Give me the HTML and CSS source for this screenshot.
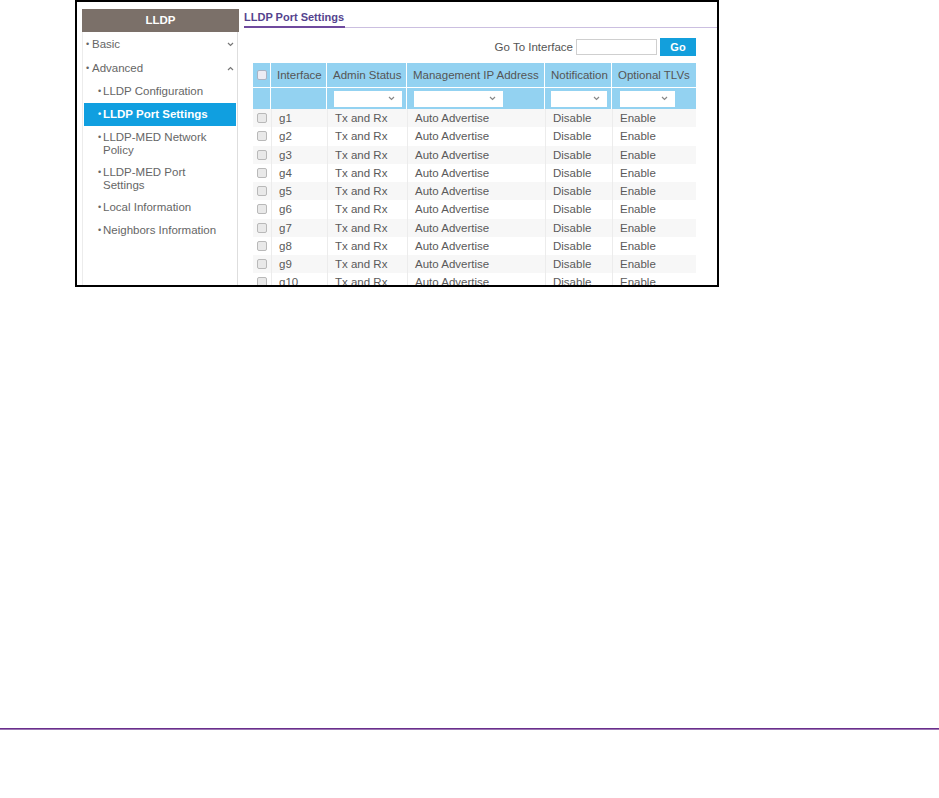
FILE: index.html
```html
<!DOCTYPE html>
<html>
<head>
<meta charset="utf-8">
<link rel="stylesheet" href="styles.css">
</head>
<body>
<div class="shot">
  <div class="side">
    <div class="side-head">LLDP</div>
    <div class="item top"><span class="b">•</span><span class="t">Basic</span><svg class="chev" width="7" height="5" viewBox="0 0 7 5"><polyline points="1,1 3.5,3.5 6,1" fill="none" stroke="#777" stroke-width="1.2"/></svg></div>
    <div class="item top"><span class="b">•</span><span class="t">Advanced</span><svg class="chev" width="7" height="5" viewBox="0 0 7 5"><polyline points="1,4 3.5,1.5 6,4" fill="none" stroke="#777" stroke-width="1.2"/></svg></div>
    <div class="item sub"><span class="b">•</span><span class="t">LLDP Configuration</span></div>
    <div class="item sub sel"><span class="b">•</span><span class="t">LLDP Port Settings</span></div>
    <div class="item sub two"><span class="b">•</span><span class="t">LLDP-MED Network<br>Policy</span></div>
    <div class="item sub two"><span class="b">•</span><span class="t">LLDP-MED Port<br>Settings</span></div>
    <div class="item sub"><span class="b">•</span><span class="t">Local Information</span></div>
    <div class="item sub"><span class="b">•</span><span class="t">Neighbors Information</span></div>
  </div>
  <div class="main">
    <div class="title-bar"><span class="title">LLDP Port Settings</span></div>
    <div class="goto">
      <span class="goto-label">Go To Interface</span>
      <span class="goto-input"></span>
      <span class="go-btn">Go</span>
    </div>
    <div class="tbl">
      <div class="row head">
        <div class="c cb"><span class="chk hchk"></span></div>
        <div class="c">Interface</div>
        <div class="c">Admin Status</div>
        <div class="c">Management IP Address</div>
        <div class="c">Notification</div>
        <div class="c">Optional TLVs</div>
      </div>
      <div class="row filt">
        <div class="c"></div>
        <div class="c"></div>
        <div class="c"><span class="sel-box s1"><svg width="7" height="5" viewBox="0 0 7 5"><polyline points="1,1 3.5,3.5 6,1" fill="none" stroke="#888" stroke-width="1.2"/></svg></span></div>
        <div class="c"><span class="sel-box s2"><svg width="7" height="5" viewBox="0 0 7 5"><polyline points="1,1 3.5,3.5 6,1" fill="none" stroke="#888" stroke-width="1.2"/></svg></span></div>
        <div class="c"><span class="sel-box s3"><svg width="7" height="5" viewBox="0 0 7 5"><polyline points="1,1 3.5,3.5 6,1" fill="none" stroke="#888" stroke-width="1.2"/></svg></span></div>
        <div class="c"><span class="sel-box s4"><svg width="7" height="5" viewBox="0 0 7 5"><polyline points="1,1 3.5,3.5 6,1" fill="none" stroke="#888" stroke-width="1.2"/></svg></span></div>
      </div>
      <div class="row data"><div class="c cb"><span class="chk"></span></div><div class="c">g1</div><div class="c">Tx and Rx</div><div class="c">Auto Advertise</div><div class="c">Disable</div><div class="c">Enable</div></div>
      <div class="row data"><div class="c cb"><span class="chk"></span></div><div class="c">g2</div><div class="c">Tx and Rx</div><div class="c">Auto Advertise</div><div class="c">Disable</div><div class="c">Enable</div></div>
      <div class="row data"><div class="c cb"><span class="chk"></span></div><div class="c">g3</div><div class="c">Tx and Rx</div><div class="c">Auto Advertise</div><div class="c">Disable</div><div class="c">Enable</div></div>
      <div class="row data"><div class="c cb"><span class="chk"></span></div><div class="c">g4</div><div class="c">Tx and Rx</div><div class="c">Auto Advertise</div><div class="c">Disable</div><div class="c">Enable</div></div>
      <div class="row data"><div class="c cb"><span class="chk"></span></div><div class="c">g5</div><div class="c">Tx and Rx</div><div class="c">Auto Advertise</div><div class="c">Disable</div><div class="c">Enable</div></div>
      <div class="row data"><div class="c cb"><span class="chk"></span></div><div class="c">g6</div><div class="c">Tx and Rx</div><div class="c">Auto Advertise</div><div class="c">Disable</div><div class="c">Enable</div></div>
      <div class="row data"><div class="c cb"><span class="chk"></span></div><div class="c">g7</div><div class="c">Tx and Rx</div><div class="c">Auto Advertise</div><div class="c">Disable</div><div class="c">Enable</div></div>
      <div class="row data"><div class="c cb"><span class="chk"></span></div><div class="c">g8</div><div class="c">Tx and Rx</div><div class="c">Auto Advertise</div><div class="c">Disable</div><div class="c">Enable</div></div>
      <div class="row data"><div class="c cb"><span class="chk"></span></div><div class="c">g9</div><div class="c">Tx and Rx</div><div class="c">Auto Advertise</div><div class="c">Disable</div><div class="c">Enable</div></div>
      <div class="row data"><div class="c cb"><span class="chk"></span></div><div class="c">g10</div><div class="c">Tx and Rx</div><div class="c">Auto Advertise</div><div class="c">Disable</div><div class="c">Enable</div></div>
    </div>
  </div>
</div>
<div class="rule"></div>
</body>
</html>
```
FILE: styles.css
```css
html, body {
  margin: 0;
  padding: 0;
  background: #fff;
}
body {
  font-family: "Liberation Sans", Arial, sans-serif;
  color: #5a5a5a;
}
.shot {
  box-sizing: border-box;
  margin-left: 75px;
  width: 644px;
  height: 287px;
  border: 2px solid #000;
  padding: 7px 0 0 5px;
  display: flex;
  overflow: hidden;
  background: #fff;
}
.side {
  width: 156px;
  flex: none;
  box-sizing: border-box;
  border-left: 1px solid #ececec;
  border-right: 1px solid #dedede;
  margin-bottom: -20px;
}
.side-head {
  height: 23px;
  margin: 0 -2px 0 -1px;
  background: #7b7069;
  color: #fff;
  font-weight: bold;
  font-size: 11.5px;
  line-height: 23px;
  text-align: center;
}
.item {
  display: flex;
  align-items: flex-start;
  font-size: 11.5px;
  line-height: 13px;
  padding: 5px 0;
  color: #666;
}
.item.top {
  padding: 5.5px 0;
  padding-left: 3px;
}
.item.sub {
  padding-left: 15px;
}
.item.two {
  line-height: 12.5px;
}
.item .b {
  width: 5px;
  flex: none;
  font-size: 9px;
}
.item.top .b {
  width: 6px;
}
.item .t {
  flex: 1;
}
.chev {
  margin: 4px 3px 0 0;
}
.item.sel {
  margin: 0 1px;
  padding-left: 14px;
  background: #109fe0;
  color: #fff;
  font-weight: bold;
}
.main {
  flex: 1;
  margin-left: 6px;
}
.title-bar {
  display: flex;
  border-bottom: 1px solid #cbbfe0;
  height: 18px;
}
.title {
  display: inline-block;
  font-size: 11px;
  font-weight: bold;
  line-height: 16px;
  color: #54438e;
  padding: 0 1px 1px 0;
  border-bottom: 2px solid #6f4a9e;
  height: 16px;
}
.goto {
  display: flex;
  justify-content: flex-end;
  align-items: center;
  margin-top: 10px;
  padding-right: 21px;
  height: 18px;
  font-size: 11.5px;
  color: #555;
}
.goto-label {
  margin-right: 3px;
}
.goto-input {
  box-sizing: border-box;
  width: 81px;
  height: 16px;
  border: 1px solid #cfcfcf;
  background: #fff;
  margin-right: 3px;
}
.go-btn {
  width: 36px;
  height: 18px;
  background: #139fdc;
  color: #fff;
  font-weight: bold;
  font-size: 11px;
  line-height: 18px;
  text-align: center;
}
.tbl {
  margin: 7px 0 0 9px;
  width: 443px;
}
.row {
  display: grid;
  grid-template-columns: 18px 56px 80px 138px 67px 84px;
  font-size: 11.5px;
}
.row.head {
  height: 24px;
}
.row.head .c, .row.filt .c {
  background: #93d2f1;
  border-right: 1px solid #fff;
}
.row.head .c:last-child, .row.filt .c:last-child {
  border-right: none;
}
.row.head .c {
  line-height: 24px;
  padding-left: 6px;
  color: #555;
  white-space: nowrap;
}
.row.head .c.cb {
  padding-left: 0;
}
.row.filt {
  height: 21px;
  border-top: 1px solid #fff;
}
.row.filt .c {
  display: flex;
  align-items: center;
}
.sel-box {
  display: flex;
  align-items: center;
  justify-content: flex-end;
  height: 16px;
  background: #fff;
  box-sizing: border-box;
  padding-right: 7px;
}
.s1 { width: 68px; margin-left: 7px; }
.s2 { width: 89px; margin-left: 7px; }
.s3 { width: 56px; margin-left: 6px; }
.s4 { width: 55px; margin-left: 8px; }
.row.data {
  height: 18.25px;
}
.row.data:nth-child(odd) {
  background: #f7f7f7;
}
.row.data .c {
  line-height: 18.25px;
  padding-left: 7px;
  border-left: 1px solid #ececec;
  white-space: nowrap;
}
.row.data .c:first-child {
  border-left: none;
}
.c.cb {
  display: flex;
  align-items: center;
  justify-content: center;
}
.row.data .c.cb {
  padding-left: 0;
}
.chk {
  display: block;
  box-sizing: border-box;
  width: 10px;
  height: 10px;
  border: 1px solid #b9b9b9;
  border-radius: 2px;
  background: #e9e9e9;
}
.hchk {
  background: #ececf4;
  border-color: #a9b3c4;
}
.rule {
  margin-top: 441px;
  height: 1px;
  background: #6a2e8c;
  border-bottom: 0.5px solid #9b76b3;
}
```
